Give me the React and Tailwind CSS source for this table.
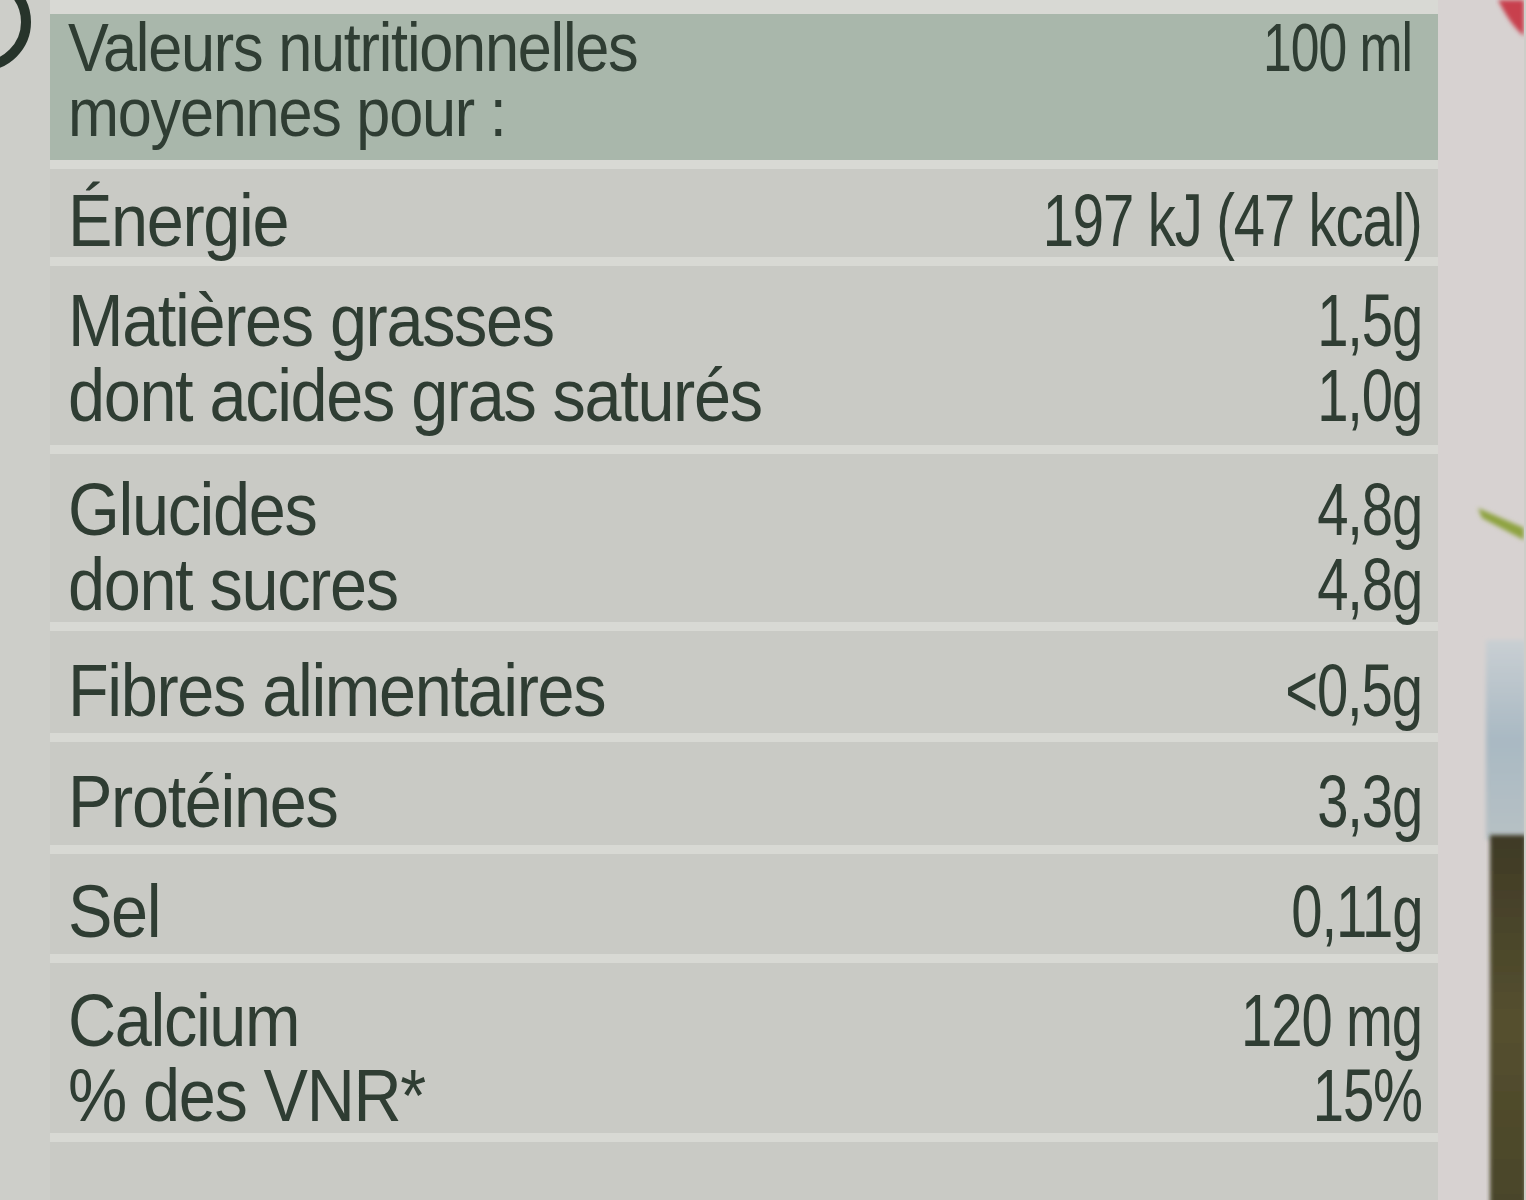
import React from "react";

const rows = [
  { h: "h-[88px]", pt: "pt-[14px]", labels: ["Énergie"], values: ["197 kJ (47 kcal)"] },
  { h: "h-[185px]", pt: "pt-[17px]", labels: ["Matières grasses", "dont acides gras saturés"], values: ["1,5g", "1,0g"] },
  { h: "h-[171px]", pt: "pt-[18px]", labels: ["Glucides", "dont sucres"], values: ["4,8g", "4,8g"] },
  { h: "h-[104px]", pt: "pt-[22px]", labels: ["Fibres alimentaires"], values: ["<0,5g"] },
  { h: "h-[106px]", pt: "pt-[22px]", labels: ["Protéines"], values: ["3,3g"] },
  { h: "h-[103px]", pt: "pt-[20px]", labels: ["Sel"], values: ["0,11g"] },
  { h: "h-[171px]", pt: "pt-[20px]", labels: ["Calcium", "% des VNR*"], values: ["120 mg", "15%"] },
];

const PhotoEdge = () => (
  <svg width="86" height="1200" viewBox="0 0 86 1200" className="block">
    <defs>
      <linearGradient id="sky" x1="0" y1="0" x2="0" y2="1">
        <stop offset="0" stopColor="#c9cfd3" />
        <stop offset="0.5" stopColor="#a9b9c3" />
        <stop offset="1" stopColor="#b7c1c4" />
      </linearGradient>
      <linearGradient id="earth" x1="0" y1="0" x2="0" y2="1">
        <stop offset="0" stopColor="#3f3a26" />
        <stop offset="0.5" stopColor="#55502f" />
        <stop offset="1" stopColor="#4a4529" />
      </linearGradient>
      <filter id="soft">
        <feGaussianBlur stdDeviation="2" />
      </filter>
    </defs>
    <rect width="86" height="1200" fill="#d7d2d1" />
    <path d="M60 0 L86 0 L86 36 C76 28 68 16 60 0 Z" fill="#c8404e" filter="url(#soft)" />
    <rect x="48" y="640" width="40" height="200" fill="url(#sky)" filter="url(#soft)" />
    <rect x="52" y="835" width="36" height="370" fill="url(#earth)" filter="url(#soft)" />
    <path d="M40 508 L86 528 L86 540 L44 518 Z" fill="#8ea33f" filter="url(#soft)" />
  </svg>
);

const Line = ({ children }) => (
  <div className="origin-left scale-x-[0.9] whitespace-nowrap text-[74px] leading-[75px] tracking-[-0.02em]">
    {children}
  </div>
);

const Value = ({ children }) => (
  <div className="origin-right scale-x-[0.76] whitespace-nowrap text-right text-[74px] leading-[75px] tracking-[-0.02em]">
    {children}
  </div>
);

export default function App() {
  return (
    <div
      className="relative flex h-[1200px] w-[1526px] overflow-hidden bg-[#cdcec9] text-[#2f3d33] blur-[0.5px]"
      style={{ fontFamily: '"Liberation Sans", Arial, sans-serif' }}
    >
      <svg className="absolute left-0 top-0" width="40" height="90" viewBox="0 0 40 90">
        <circle cx="-18" cy="22" r="44" fill="none" stroke="#27342b" strokeWidth="10" />
      </svg>

      <div className="w-[50px] shrink-0" />

      <div className="flex w-[1388px] shrink-0 flex-col gap-[9px] bg-[#d8d9d4] pt-[14px]">
        <div className="flex h-[151px] justify-between bg-[#a9b7ab] pl-[18px] pr-[26px]">
          <div className="pt-[1px]">
            <div className="origin-left scale-x-[0.9] whitespace-nowrap text-[68px] leading-[65px] tracking-[-0.02em]">
              Valeurs nutritionnelles
            </div>
            <div className="origin-left scale-x-[0.9] whitespace-nowrap text-[68px] leading-[65px] tracking-[-0.02em]">
              moyennes pour :
            </div>
          </div>
          <div className="pt-[1px] origin-right scale-x-[0.76] whitespace-nowrap text-[68px] leading-[65px] tracking-[-0.02em]">
            100 ml
          </div>
        </div>

        {rows.map((r, i) => (
          <div key={i} className={`flex justify-between bg-[#c9cac5] pl-[18px] pr-[16px] ${r.h} ${r.pt}`}>
            <div>
              {r.labels.map((l) => (
                <Line key={l}>{l}</Line>
              ))}
            </div>
            <div>
              {r.values.map((v, j) => (
                <Value key={j}>{v}</Value>
              ))}
            </div>
          </div>
        ))}

        <div className="h-[60px] bg-[#c9cac5]" />
      </div>

      <div className="flex-1">
        <PhotoEdge />
      </div>
    </div>
  );
}
